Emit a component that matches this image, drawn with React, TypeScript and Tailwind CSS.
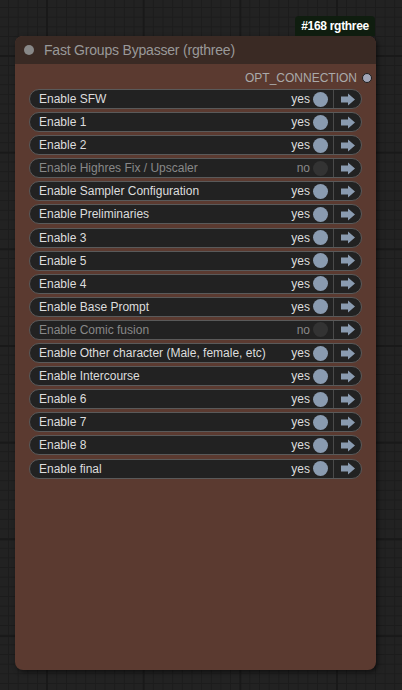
import React from "react";

type Row = { label: string; on: boolean };

const rows: Row[] = [
  { label: "Enable SFW", on: true },
  { label: "Enable 1", on: true },
  { label: "Enable 2", on: true },
  { label: "Enable Highres Fix / Upscaler", on: false },
  { label: "Enable Sampler Configuration", on: true },
  { label: "Enable Preliminaries", on: true },
  { label: "Enable 3", on: true },
  { label: "Enable 5", on: true },
  { label: "Enable 4", on: true },
  { label: "Enable Base Prompt", on: true },
  { label: "Enable Comic fusion", on: false },
  { label: "Enable Other character (Male, female, etc)", on: true },
  { label: "Enable Intercourse", on: true },
  { label: "Enable 6", on: true },
  { label: "Enable 7", on: true },
  { label: "Enable 8", on: true },
  { label: "Enable final", on: true },
];

const Arrow: React.FC = () => (
  <svg width="16" height="13" viewBox="0 0 16 13">
    <path d="M1 3.5 H8 V0.5 L15 6.5 L8 12.5 V9.5 H1 Z" fill="#8a9bb0" />
  </svg>
);

const GroupRow: React.FC<{ row: Row }> = ({ row }) => (
  <div className="flex items-center h-[20px] rounded-full border border-[#5a5a5a] bg-[#222]">
    <span
      className={`flex-1 pl-[9px] truncate ${
        row.on ? "text-[#ddd]" : "text-[#888]"
      }`}
    >
      {row.label}
    </span>
    <span className={row.on ? "text-[#ddd]" : "text-[#888]"}>
      {row.on ? "yes" : "no"}
    </span>
    <span
      className={`ml-[3px] mr-[5px] w-[15px] h-[15px] rounded-full ${
        row.on ? "bg-[#8a9bb0]" : "bg-[#333]"
      }`}
    ></span>
    <div className="flex items-center justify-center w-[28px] h-full border-l border-[#4a4a4a]">
      <Arrow />
    </div>
  </div>
);

const App: React.FC = () => {
  return (
    <div
      className="relative w-[402px] h-[690px] overflow-hidden bg-[#222] pt-[16px] pl-[15px] text-[12px] [font-family:'Liberation_Sans',Arial,sans-serif] [background-image:linear-gradient(to_right,#191919_2px,transparent_2px),linear-gradient(to_bottom,#191919_2px,transparent_2px),linear-gradient(to_right,#1c1c1c_1px,transparent_1px),linear-gradient(to_bottom,#1c1c1c_1px,transparent_1px)] [background-size:96.7px_96.7px,96.7px_96.7px,9.67px_9.67px,9.67px_9.67px] [background-position:46px_55px,46px_55px,8px_7px,8px_7px]"
    >
      <div className="flex justify-end w-[361px] pr-[1px]">
        <div className="h-[20px] px-[6px] flex items-center rounded-t-[4px] bg-[#0f1d0f] text-white font-bold text-[12px] tracking-[-0.3px]">
          #168 rgthree
        </div>
      </div>
      <div className="w-[361px] h-[634px] rounded-[8px] bg-[#5b3a30] shadow-[2px_2px_5px_rgba(0,0,0,0.55)] overflow-hidden">
        <div className="flex items-center h-[28px] bg-[#3a2a24] pl-[9px] gap-[10px]">
          <span className="w-[10px] h-[10px] rounded-full bg-[#888]"></span>
          <span className="text-[#999] text-[14px] tracking-[-0.2px]">
            Fast Groups Bypasser (rgthree)
          </span>
        </div>
        <div className="flex justify-end items-center h-[23px] pt-[5px] pr-[4px] gap-[5px] text-[#aaa]">
          <span>OPT_CONNECTION</span>
          <span className="w-[10px] h-[10px] rounded-full bg-[#a2a6b8] border-[1.5px] border-[#1e1e1e]"></span>
        </div>
        <div className="flex flex-col gap-[3.1px] pl-[14px] pr-[14px] pt-[2px]">
          {rows.map((r, i) => (
            <GroupRow key={i} row={r} />
          ))}
        </div>
      </div>
    </div>
  );
};

export default App;
